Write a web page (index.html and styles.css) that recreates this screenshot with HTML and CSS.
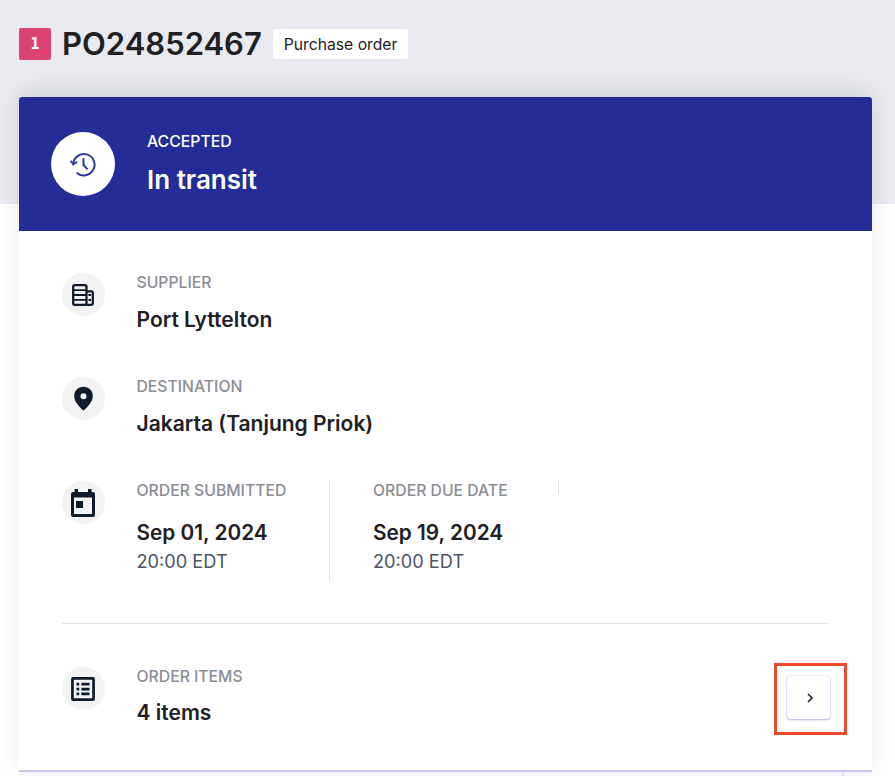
FILE: index.html
```html
<!DOCTYPE html>
<html lang="en">
<head>
<meta charset="utf-8">
<title>PO24852467</title>
<link rel="stylesheet" href="styles.css">
</head>
<body>
<div class="page">
  <header class="head">
    <span class="badge">1</span>
    <h1 class="po">PO24852467</h1>
    <span class="tag">Purchase order</span>
  </header>
  <main class="card">
    <section class="status">
      <div class="status-icon">
        <svg width="29" height="29" viewBox="0 0 32 32" fill="none" stroke="#2f37a6" stroke-width="2.2"><path d="M4.600 15.800A11.800 11.800 0 1 1 8.500 25"/><path d="M1.800 11.800l2.900 4.200 4.300-3" stroke-width="2"/><path d="M16 9v7.600l4.600 4.800" stroke-width="2.200"/></svg>
      </div>
      <div>
        <div class="status-label">ACCEPTED</div>
        <div class="status-value">In transit</div>
      </div>
    </section>
    <section class="body">
      <div class="row row-supplier">
        <div class="icon">
          <svg width="24" height="24" viewBox="0 0 24 24" fill="none" stroke="#0f1b2a" stroke-width="2.300"><rect x="2.200" y="2.200" width="13.300" height="19.600" rx="1.600"/><path d="M2 7.200h13M2 12h13M2 16.900h13" stroke-width="1.800"/><path d="M15.500 8.300h5a1.300 1.300 0 0 1 1.300 1.300v10.900a1.300 1.300 0 0 1-1.300 1.300h-5"/><path d="M17.400 12h2.600M17.400 17h2.600" stroke-width="2"/></svg>
        </div>
        <div>
          <div class="label">SUPPLIER</div>
          <div class="value">Port Lyttelton</div>
        </div>
      </div>
      <div class="row row-dest">
        <div class="icon">
          <svg width="27" height="27" viewBox="0 0 24 24"><path fill="#0f1b2a" fill-rule="evenodd" d="M12 1.500c-4.700 0-8.300 3.600-8.300 8.200 0 5 4.800 9.900 8.300 13 3.500-3.100 8.300-8 8.300-13 0-4.600-3.600-8.200-8.300-8.200zM12 7.300a2.700 2.700 0 1 1 0 5.400 2.700 2.700 0 0 1 0-5.400z"/></svg>
        </div>
        <div>
          <div class="label">DESTINATION</div>
          <div class="value">Jakarta (Tanjung Priok)</div>
        </div>
      </div>
      <div class="row row-dates">
        <div class="icon">
          <svg width="24" height="28" viewBox="0 0 24 28"><path fill="#0f1b2a" fill-rule="evenodd" d="M3.500 0H7v3h10V0h3.500v3H22a2 2 0 0 1 2 2v21a2 2 0 0 1-2 2H2a2 2 0 0 1-2-2V5a2 2 0 0 1 2-2h1.500zM3 8.500V25h18V8.500zM5 12h7v7H5z"/></svg>
        </div>
        <div class="dates">
          <div class="date first">
            <div class="label">ORDER SUBMITTED</div>
            <div class="value date-value">Sep 01, 2024</div>
            <div class="time">20:00 EDT</div>
          </div>
          <div class="date second">
            <div class="label">ORDER DUE DATE</div>
            <div class="value date-value">Sep 19, 2024</div>
            <div class="time">20:00 EDT</div>
          </div>
          <div class="tick"></div>
        </div>
      </div>
      <div class="row row-items">
        <div class="icon">
          <svg width="26" height="26" viewBox="0 0 24 24"><path fill="#0f1b2a" fill-rule="evenodd" d="M2.800 1h18.400A1.800 1.800 0 0 1 23 2.800v18.400a1.800 1.800 0 0 1-1.800 1.800H2.800A1.800 1.800 0 0 1 1 21.200V2.800A1.800 1.800 0 0 1 2.800 1zM3.500 3.500v17h17v-17zM6 6.200h2.500v2.500H6zM10.500 6.200H18v2.500h-7.500zM6 10.800h2.500v2.500H6zM10.500 10.800H18v2.500h-7.500zM6 15.300h2.500v2.500H6zM10.500 15.300H18v2.500h-7.500z"/></svg>
        </div>
        <div class="items-text">
          <div class="label">ORDER ITEMS</div>
          <div class="value items-value">4 items</div>
        </div>
        <div class="highlight">
          <button class="next" type="button" aria-label="Next">
            <svg class="chevron" width="8" height="10" viewBox="0 0 8 10" fill="none" stroke="#0f1b2a" stroke-width="1.500"><path d="M2 1l4 4-4 4"/></svg>
          </button>
        </div>
      </div>
    </section>
  </main>
  <div class="below"><div class="below-cell"></div></div>
</div>
</body>
</html>
```
FILE: styles.css
```css
* { box-sizing: border-box; }
html, body { margin: 0; padding: 0; }
body { font-family: Inter, "Liberation Sans", sans-serif; color: #1f2023; background: #fff; }
.page {
  width: 895px;
  height: 776px;
  overflow: hidden;
  padding: 27px 23px 0 19px;
  background: linear-gradient(#e9eaef 204px, #fff 204px);
}
.head { display: flex; align-items: center; height: 33px; }
.badge {
  width: 32px; height: 32px; border-radius: 2px;
  background: #db4173; color: #fff;
  display: flex; align-items: center; justify-content: center;
  font: 700 15px "DejaVu Sans Mono", monospace;
}
.po { margin: 0 0 0 11px; font-size: 31px; line-height: 33px; font-weight: 600; color: #1f2023; }
.tag {
  margin: 1px 0 0 11px; height: 30px; padding: 0 11px;
  background: #fff; border-radius: 2px;
  display: flex; align-items: center;
  font-size: 15.700px; color: #1f2023;
}
.card {
  margin-top: 37px;
  width: 853px;
  height: 675px;
  background: #fff;
  border-radius: 3px 3px 0 0;
  border-bottom: 2px solid #cbc8ee;
  box-shadow: 0 -6px 22px rgba(30, 35, 70, .11);
  position: relative;
}
.status {
  height: 134px; background: #242c96; border-radius: 3px 3px 0 0;
  padding: 35px 32px; display: flex; gap: 32px; color: #fff;
}
.status-icon {
  width: 64px; height: 64px; border-radius: 50%; background: #fff;
  display: flex; align-items: center; justify-content: center; flex: none;
}
.status-label { font-size: 15.800px; line-height: 20px; font-weight: 500; }
.status-value { margin-top: 12px; font-size: 26px; line-height: 32px; font-weight: 600; }
.body { padding: 0 43px; }
.row { display: flex; gap: 32px; }
.row-supplier { padding-top: 42px; height: 146px; }
.row-dest { height: 104px; }
.row-dates { height: 143px; border-bottom: 1px solid #e4e4e8; }
.row-items { padding-top: 43px; position: relative; }
.icon {
  width: 42.500px; height: 43px; border-radius: 50%; background: #f3f3f4;
  display: flex; align-items: center; justify-content: center; flex: none;
}
.label { font-size: 15.750px; line-height: 20px; font-weight: 500; color: #8a8d93; }
.value { margin-top: 15px; font-size: 21px; line-height: 24px; font-weight: 600; color: #1f2023; }
.dates { display: flex; align-items: flex-start; }
.date { height: 100px; }
.first { width: 193.500px; border-right: 1px solid #dedee2; }
.second { width: 228px; padding-left: 43px; }
.tick { width: 1px; height: 13px; background: #dedee2; }
.date-value { margin-top: 20px; font-size: 20.800px; }
.items-value { margin-top: 14px; }
.time { margin-top: 5px; font-size: 18.200px; line-height: 22px; color: #4b5563; }
.items-text { flex: 1; }
.highlight {
  position: absolute; right: -18px; top: 39px;
  width: 73px; height: 72px;
  border: 3px solid #f04a2a;
  padding: 10px 0 0 10px;
}
.next {
  width: 43px; height: 43px; padding: 0 0 0 3px; border: 0; border-radius: 4px; background: #fff;
  box-shadow: 0 0 2px rgba(90, 90, 210, .3), 0 1px 2px rgba(60, 60, 190, .35);
  display: flex; align-items: center; justify-content: center;
}
.below { width: 853px; height: 6px; background: #fbfaff; display: flex; }
.below-cell { width: 825px; height: 6px; border-right: 2px solid #e8e8ec; }
```
